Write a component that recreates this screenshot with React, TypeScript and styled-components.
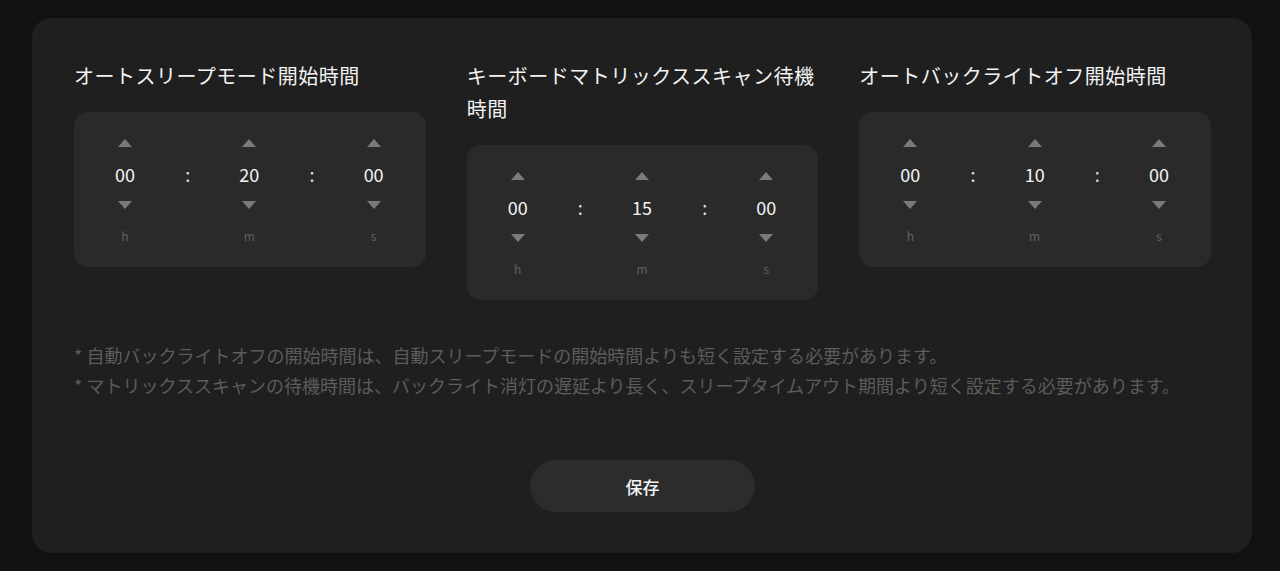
import styled, { createGlobalStyle } from "styled-components"

const Global = createGlobalStyle`
    html, body{
        margin: 0;
        padding: 0;
        background: #111111;
    }
    body{
        font-family: "Noto Sans CJK JP", "Noto Sans", sans-serif;
    }
`

const Page = styled.div`
    padding: 18px 28px 18px 32px;
    min-height: 571px;
    box-sizing: border-box;
`

const Card = styled.section`
    background: #1f1f1f;
    border-radius: 20px;
    padding: 41px 41px 41px 42px;
    display: flex;
    flex-direction: column;
    align-items: center;
`

const Grid = styled.div`
    width: 100%;
    display: grid;
    grid-template-columns: repeat(3, 1fr);
    column-gap: 41px;
    align-items: start;
`

const Setting = styled.div`
    display: flex;
    flex-direction: column;
    gap: 20px;
`

const Title = styled.h3`
    margin: 0;
    font-size: 20px;
    font-weight: 400;
    letter-spacing: 0.5px;
    line-height: 33px;
    color: #f2f2f2;
`

const Picker = styled.div`
    background: #2a2a2a;
    border-radius: 14px;
    height: 155px;
    box-sizing: border-box;
    padding: 15px 32px 0 31px;
    display: flex;
    justify-content: space-between;
`

const Unit = styled.div<{ $wide?: boolean }>`
    width: ${p => (p.$wide ? "40px" : "4px")};
    display: grid;
    grid-template-rows: repeat(4, 31px);
    justify-items: center;
    align-items: center;
`

const Arrow = styled.span<{ $down?: boolean }>`
    width: 0;
    height: 0;
    border-left: 7.5px solid transparent;
    border-right: 7.5px solid transparent;
    ${p => (p.$down ? "border-top: 8px solid #7a7a7a;" : "border-bottom: 8px solid #7a7a7a;")}
    cursor: pointer;
`

const Value = styled.span`
    font-size: 18px;
    color: #f4f4f4;
    line-height: 1;
`

const Colon = styled.span`
    grid-row: 2;
    font-size: 18px;
    color: #e0e0e0;
    line-height: 1;
`

const Label = styled.span`
    font-size: 12px;
    color: #616161;
    line-height: 1;
`

const Notes = styled.div`
    width: 100%;
    margin-top: 40px;
    p{
        margin: 0;
        font-size: 18px;
        line-height: 30px;
        color: #5c5c5c;
        white-space: nowrap;
    }
`

const SaveButton = styled.button`
    margin-top: 60px;
    width: 225px;
    height: 52px;
    border: none;
    border-radius: 26px;
    background: #2c2c2c;
    color: #f4f4f4;
    font-family: "Noto Sans CJK JP", "Noto Sans", sans-serif;
    font-size: 17px;
    font-weight: 500;
    cursor: pointer;
`

const settings = [
    { title: "オートスリープモード開始時間", time: ["00", "20", "00"] },
    { title: "キーボードマトリックススキャン待機時間", time: ["00", "15", "00"] },
    { title: "オートバックライトオフ開始時間", time: ["00", "10", "00"] },
]

const units = ["h", "m", "s"]

const TimePicker = function ({ time }: { time: string[] }) {
    return (
        <Picker>
            {time.map((v, i) => (
                <>
                    {i > 0 && (
                        <Unit key={"c" + i}>
                            <Colon>:</Colon>
                        </Unit>
                    )}
                    <Unit $wide key={i}>
                        <Arrow />
                        <Value>{v}</Value>
                        <Arrow $down />
                        <Label>{units[i]}</Label>
                    </Unit>
                </>
            ))}
        </Picker>
    )
}

export default function App() {
    return (
        <Page>
            <Global />
            <Card>
                <Grid>
                    {settings.map(s => (
                        <Setting key={s.title}>
                            <Title>{s.title}</Title>
                            <TimePicker time={s.time} />
                        </Setting>
                    ))}
                </Grid>
                <Notes>
                    <p>* 自動バックライトオフの開始時間は、自動スリープモードの開始時間よりも短く設定する必要があります。</p>
                    <p>* マトリックススキャンの待機時間は、バックライト消灯の遅延より長く、スリープタイムアウト期間より短く設定する必要があります。</p>
                </Notes>
                <SaveButton>保存</SaveButton>
            </Card>
        </Page>
    )
}
